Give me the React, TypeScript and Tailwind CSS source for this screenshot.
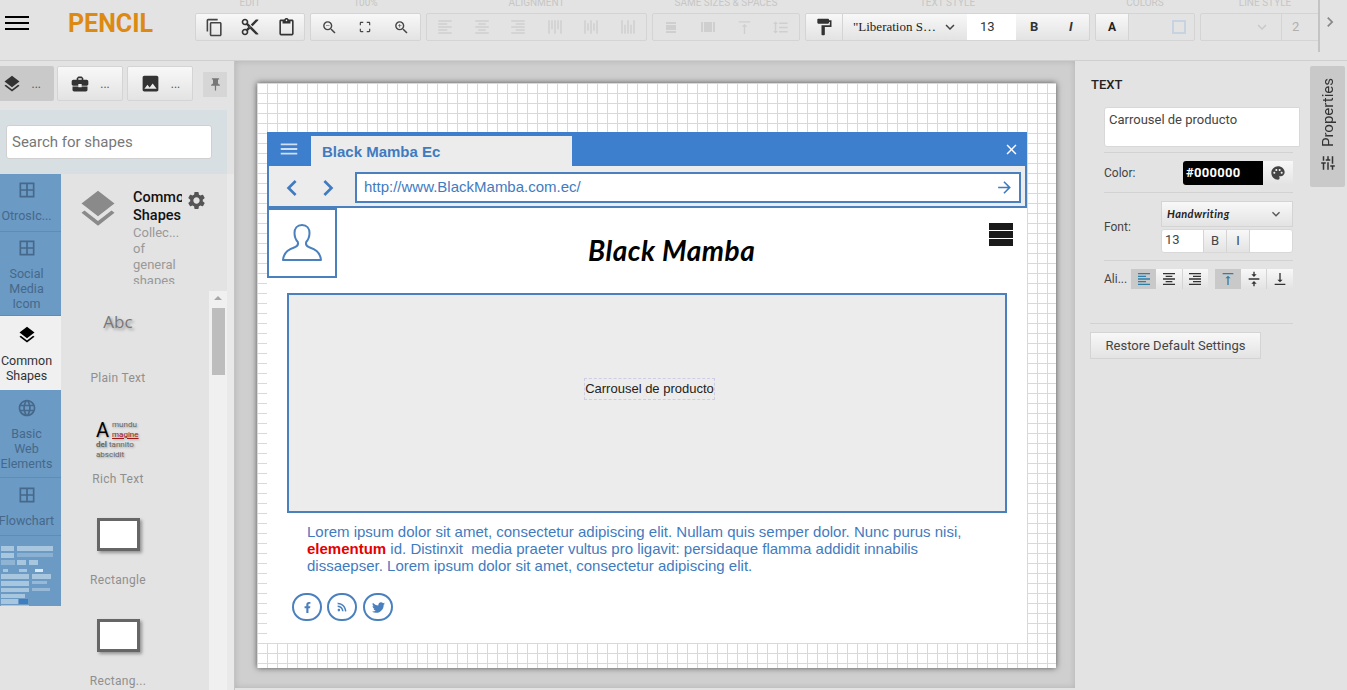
import { ReactNode } from "react"
import {
  MdContentCopy, MdContentCut, MdContentPaste, MdZoomIn, MdZoomOut, MdCropFree,
  MdFormatAlignLeft, MdFormatAlignCenter, MdFormatAlignRight, MdFormatLineSpacing,
  MdFormatPaint, MdLayers, MdBusinessCenter, MdImage, MdPushPin, MdBorderAll, MdLanguage,
  MdSettings, MdPalette, MdTune, MdVerticalAlignTop, MdVerticalAlignBottom, MdVerticalAlignCenter,
  MdKeyboardArrowDown, MdChevronRight, MdClose, MdMenu, MdArrowForward, MdChevronLeft,
} from "react-icons/md"
import { FaFacebookF, FaRss, FaTwitter } from "react-icons/fa"

const btn = "bg-gradient-to-b from-[#f8f8f8] to-[#e3e3e3]"

const Group = ({ label, w, off, children }: { label: string; w: string; off?: boolean; children: ReactNode }) => (
  <div className={`${w} shrink-0 flex flex-col items-stretch`}>
    <div className="h-[13px] overflow-hidden text-center text-[10px] leading-[6px] text-[#c6c6c6] whitespace-nowrap">{label}</div>
    <div className={`h-[28px] flex items-center border border-[#d4d4d4] rounded-[2px] ${off ? "" : btn}`}>{children}</div>
  </div>
)

const Cell = ({ children, className = "" }: { children?: ReactNode; className?: string }) => (
  <div className={`flex-1 h-full flex items-center justify-center ${className}`}>{children}</div>
)

const Bars = ({ h = false }: { h?: boolean }) => (
  <svg width="16" height="16" viewBox="0 0 16 16" fill="#cfcfcf">
    {h ? <path d="M3 3h10v2H3zM3 6h10v5H3zM3 12h10v2H3z" /> : <path d="M1 3h2v10H1zM4 3h8v10H4zM13 3h2v10h-2z" />}
  </svg>
)

const Category = ({ icon, lines, h, pt, active }: { icon: ReactNode; lines: string[]; h: string; pt: string; active?: boolean }) => (
  <div className={`${h} ${pt} w-full flex flex-col items-center overflow-hidden pr-[8px] text-[12.5px] leading-[15px] text-center border-b ${active ? "bg-[#f0f0f0] text-[#333] border-transparent" : "bg-[#6b9ac4] text-[#46688a] border-[#5f8cb5]"}`}>
    <div className="h-[30px] flex items-center justify-center shrink-0">{icon}</div>
    <div className="whitespace-nowrap mt-[3px]">
      {lines.map((l) => <div key={l}>{l}</div>)}
    </div>
  </div>
)

const ShapeItem = ({ label, pt, children }: { label: string; pt: string; children: ReactNode }) => (
  <div className="h-[101px] shrink-0 flex flex-col items-center">
    <div className={`h-[79px] w-full flex justify-center ${pt}`}>{children}</div>
    <div className="text-[12px] leading-[16px] tracking-[0.3px] text-[#8f8f8f]">{label}</div>
  </div>
)

const RectShape = () => <div className="w-[43px] h-[33px] bg-white border-[3px] border-[#666] shadow-[2px_2px_3px_rgba(0,0,0,0.35)]" />

const Separator = ({ className = "" }: { className?: string }) => <div className={`h-px bg-[#d2d2d2] ${className}`} />

const SocialIcon = ({ children }: { children: ReactNode }) => (
  <div className="w-[30px] h-[28px] rounded-full border-2 border-[#4a80be] flex items-center justify-center text-[#4a80be]">{children}</div>
)

const App = () => {
  return (
    <div className="w-[1347px] h-[690px] overflow-hidden flex flex-col bg-[#e3e3e3] font-['Roboto',sans-serif]">
      {/* top bar */}
      <div className="h-[61px] shrink-0 flex border-b border-[#cfcfcf]">
        <div className="w-[68px] shrink-0 pl-[5px] pt-[16px]">
          <div className="w-[24px] h-[14px] flex flex-col justify-between">
            <div className="h-[2px] bg-black" />
            <div className="h-[2px] bg-black" />
            <div className="h-[2px] bg-black" />
          </div>
        </div>
        <div className="w-[127px] shrink-0 pt-[9px] text-[25px] leading-[30px] font-bold text-[#dd8a12]">PENCIL</div>
        <div className="w-[1123px] shrink-0 h-[52px] flex gap-[5px] overflow-hidden">
          <Group label="EDIT" w="w-[110px]">
            <Cell><MdContentCopy size={19} className="text-[#444]" /></Cell>
            <Cell><MdContentCut size={20} className="text-[#333]" /></Cell>
            <Cell><MdContentPaste size={19} className="text-[#333]" /></Cell>
          </Group>
          <Group label="100%" w="w-[111px]">
            <Cell><MdZoomOut size={17} className="text-[#444]" /></Cell>
            <Cell><MdCropFree size={14} className="text-[#444]" /></Cell>
            <Cell><MdZoomIn size={17} className="text-[#444]" /></Cell>
          </Group>
          <Group label="ALIGNMENT" w="w-[221px]" off>
            <Cell><MdFormatAlignLeft size={18} className="text-[#cfcfcf]" /></Cell>
            <Cell><MdFormatAlignCenter size={18} className="text-[#cfcfcf]" /></Cell>
            <Cell><MdFormatAlignRight size={18} className="text-[#cfcfcf]" /></Cell>
            <Cell><MdFormatAlignLeft size={18} className="text-[#cfcfcf] rotate-90" /></Cell>
            <Cell><MdFormatAlignCenter size={18} className="text-[#cfcfcf] rotate-90" /></Cell>
            <Cell><MdFormatAlignRight size={18} className="text-[#cfcfcf] rotate-90" /></Cell>
          </Group>
          <Group label="SAME SIZES & SPACES" w="w-[148px]" off>
            <Cell><Bars h /></Cell>
            <Cell><Bars /></Cell>
            <Cell><MdVerticalAlignTop size={17} className="text-[#cfcfcf]" /></Cell>
            <Cell><MdFormatLineSpacing size={17} className="text-[#cfcfcf]" /></Cell>
          </Group>
          <Group label="TEXT STYLE" w="w-[285px]">
            <div className="w-[37px] h-full flex items-center justify-center border-r border-[#d4d4d4]">
              <MdFormatPaint size={20} className="text-[#333]" />
            </div>
            <div className="w-[124px] h-full flex items-center justify-between pl-[10px] pr-[8px] font-['Liberation_Serif',serif] text-[13px] text-[#222] whitespace-nowrap">
              <span>"Liberation S…</span>
              <MdKeyboardArrowDown size={18} className="text-[#444]" />
            </div>
            <div className="w-[49px] h-full bg-white flex items-center pl-[13px] text-[13px] text-[#333]">13</div>
            <Cell className="font-bold text-[13px] text-[#333]">B</Cell>
            <Cell className="font-bold italic text-[13px] text-[#333]">I</Cell>
          </Group>
          <Group label="COLORS" w="w-[100px]" off>
            <div className={`w-[33px] h-full flex items-center justify-center border-r border-[#d4d4d4] font-bold text-[12px] text-[#222] ${btn}`}>A</div>
            <div className="flex-1 h-full flex items-center justify-end pr-[8px]">
              <div className="w-[14px] h-[14px] border-2 border-[#c7d3e0]" />
            </div>
          </Group>
          <Group label="LINE STYLE" w="w-[130px]" off>
            <div className="w-[81px] h-full flex items-center justify-end pr-[10px] border-r border-[#d4d4d4]">
              <MdKeyboardArrowDown size={18} className="text-[#c9c9c9]" />
            </div>
            <div className="pl-[10px] text-[13px] text-[#b0b0b0]">2</div>
          </Group>
        </div>
        <div className="w-[2px] h-[52px] shrink-0 bg-[#c4c4c4]" />
        <div className="flex-1 pt-[12px]"><MdChevronRight size={20} className="text-[#888]" /></div>
      </div>

      <div className="flex-1 flex min-h-0">
        {/* left panel */}
        <div className="w-[235px] shrink-0 flex flex-col border-r border-[#c4c4c4]">
          <div className="h-[49px] shrink-0 flex pt-[5px] text-[12px] text-[#555]">
            <div className="w-[54px] h-[35px] bg-[#c9c9c9] flex items-center justify-end gap-[10px] pr-[13px] rounded-r-[2px]">
              <MdLayers size={20} className="text-[#333]" /><span>...</span>
            </div>
            <div className={`ml-[3px] w-[66px] h-[35px] border border-[#d4d4d4] rounded-[2px] flex items-center justify-center gap-[10px] ${btn}`}>
              <MdBusinessCenter size={20} className="text-[#333]" /><span>...</span>
            </div>
            <div className={`ml-[4px] w-[66px] h-[35px] border border-[#d4d4d4] rounded-[2px] flex items-center justify-center gap-[10px] ${btn}`}>
              <MdImage size={21} className="text-[#333]" /><span>...</span>
            </div>
            <div className="ml-[10px] mt-[6px] w-[24px] h-[25px] bg-[#d6d6d6] flex items-center justify-center">
              <MdPushPin size={15} className="text-[#777]" />
            </div>
          </div>
          <div className="w-[227px] h-[64px] shrink-0 bg-[#d8dfe3] pl-[6px] pt-[15px]">
            <div className="w-[206px] h-[34px] bg-white border border-[#d0d0d0] rounded-[3px] flex items-center pl-[5px] text-[15px] text-[#777]">Search for shapes</div>
          </div>
          <div className="flex-1 min-h-0 flex">
            <div className="w-[61px] shrink-0 flex flex-col overflow-hidden">
              <Category h="h-[58px]" pt="pt-[1px]" lines={["OtrosIc..."]} icon={<MdBorderAll size={20} className="text-[#46688a]" />} />
              <Category h="h-[84px]" pt="pt-[1px]" lines={["Social", "Media", "Icom"]} icon={<MdBorderAll size={20} className="text-[#46688a]" />} />
              <Category h="h-[74px]" pt="pt-[4px]" active lines={["Common", "Shapes"]} icon={<MdLayers size={20} className="text-black" />} />
              <Category h="h-[88px]" pt="pt-[3px]" lines={["Basic", "Web", "Elements"]} icon={<MdLanguage size={20} className="text-[#46688a]" />} />
              <Category h="h-[58px]" pt="pt-[2px]" lines={["Flowchart"]} icon={<MdBorderAll size={20} className="text-[#46688a]" />} />
              <div className="h-[70px] bg-[#6b9ac4]">
                <svg width="61" height="70" viewBox="0 0 61 70" fill="#a9c6df">
                  <rect x="1" y="10" width="13" height="5" /><rect x="17" y="10" width="36" height="5" />
                  <rect x="1" y="17" width="13" height="5" /><rect x="17" y="17" width="36" height="4" opacity=".5" />
                  <rect x="1" y="24" width="14" height="5" opacity=".6" /><rect x="17" y="24" width="9" height="5" /><rect x="29" y="24" width="9" height="5" />
                  <rect x="3" y="33" width="5" height="3" /><rect x="19" y="33" width="8" height="3" /><rect x="35" y="33" width="8" height="3" fill="#dbe8f3" />
                  <rect x="1" y="38" width="28" height="5" /><rect x="32" y="38" width="19" height="5" />
                  <rect x="1" y="45" width="28" height="5" /><rect x="32" y="45" width="15" height="3" opacity=".7" />
                  <rect x="1" y="52" width="28" height="4" /><rect x="32" y="52" width="18" height="3" opacity=".7" />
                  <rect x="1" y="58" width="24" height="4" />
                  <rect x="1" y="63" width="17" height="5" /><rect x="19" y="63" width="9" height="5" fill="#3f7cc0" />
                  <rect x="1" y="69" width="28" height="1" />
                </svg>
              </div>
            </div>
            <div className="w-[166px] shrink-0 flex flex-col">
              <div className="h-[117px] shrink-0 flex pl-[15px] pt-[15px] overflow-hidden">
                <MdLayers size={44} className="text-[#8a8a8a] shrink-0 mt-[-2px]" />
                <div className="ml-[13px] w-[49px] shrink-0 h-[95px] overflow-hidden">
                  <div className="text-[14.5px] leading-[18px] font-medium text-[#111] overflow-hidden whitespace-nowrap">Common</div>
                  <div className="text-[14.5px] leading-[18px] font-medium text-[#111]">Shapes</div>
                  <div className="text-[13px] leading-[16px] text-[#999]">Collec...</div>
                  <div className="text-[13px] leading-[16px] text-[#999]">of</div>
                  <div className="text-[13px] leading-[16px] text-[#999]">general</div>
                  <div className="text-[13px] leading-[16px] text-[#999]">shapes</div>
                </div>
                <MdSettings size={21} className="text-[#555] ml-[4px] mt-[1px] shrink-0" />
              </div>
              <div className="flex-1 min-h-0 flex">
                <div className="w-[148px] shrink-0 pr-[34px] flex flex-col overflow-hidden">
                  <ShapeItem label="Plain Text" pt="pt-[21px]">
                    <div className="text-[17px] leading-[20px] text-[#777] font-['Open_Sans',sans-serif] [text-shadow:2px_2px_3px_rgba(0,0,0,0.35)]">Abc</div>
                  </ShapeItem>
                  <ShapeItem label="Rich Text" pt="pt-[28px]">
                    <div className="w-[44px] text-[8px] leading-[10px] text-[#666] [text-shadow:1px_1px_2px_rgba(0,0,0,0.3)]">
                      <div className="flex">
                        <span className="text-[20px] leading-[20px] text-black mr-[3px]">A</span>
                        <div><div>mundu</div><div className="text-[#a01818] underline">magine</div></div>
                      </div>
                      <div><b>del</b> tannito</div>
                      <div>abscidit</div>
                    </div>
                  </ShapeItem>
                  <ShapeItem label="Rectangle" pt="pt-[25px]"><RectShape /></ShapeItem>
                  <ShapeItem label="Rectang..." pt="pt-[25px]"><RectShape /></ShapeItem>
                </div>
                <div className="w-[18px] shrink-0 bg-[#f0f0f0] flex flex-col items-center">
                  <div className="h-[17px] pt-[5px]"><div className="w-0 h-0 border-x-[4px] border-x-transparent border-b-[4px] border-b-[#a8a8a8]" /></div>
                  <div className="w-[13px] h-[67px] bg-[#bdbdbd]" />
                </div>
              </div>
            </div>
            <div className="w-[7px] shrink-0 bg-[#e9e9e9]" />
          </div>
        </div>

        {/* canvas */}
        <div className="w-[840px] shrink-0 bg-[#cfcfcf] pl-[22px] pt-[22px] border-b-2 border-[#e3e3e3] shadow-[inset_0_0_6px_rgba(0,0,0,0.14)]">
          <div className="w-[799px] h-[585px] pl-[10px] pt-[49px] bg-white bg-[linear-gradient(#d9d9d9_1px,transparent_1px),linear-gradient(90deg,#d9d9d9_1px,transparent_1px)] bg-[size:10px_10px] shadow-[0_0_6px_rgba(0,0,0,0.6)]">
            <div className="w-[760px] h-[511px] bg-white flex flex-col">
              <div className="h-[34px] shrink-0 bg-[#3d7fcc] flex items-end">
                <div className="w-[44px] h-full flex items-center justify-center"><MdMenu size={22} className="text-[#cfe0f3]" /></div>
                <div className="w-[261px] h-[30px] bg-[#ececec] pl-[11px] pt-[2px] flex items-center font-['Liberation_Sans',sans-serif] font-bold text-[15px] text-[#3f7bc0]">Black Mamba Ec</div>
                <div className="flex-1 h-full flex items-center justify-end pr-[7px]"><MdClose size={17} className="text-white" /></div>
              </div>
              <div className="h-[42px] shrink-0 bg-[#ececec] border-x-2 border-b-[2px] border-[#4a80be] flex items-center pt-[3px]">
                <MdChevronLeft size={32} className="text-[#3f7bc0] ml-[7px]" />
                <MdChevronRight size={32} className="text-[#3f7bc0] ml-[4px]" />
                <div className="ml-[11px] w-[666px] h-[31px] bg-white border-2 border-[#4a80be] flex items-center justify-between pl-[7px] pr-[5px] font-['Liberation_Sans',sans-serif] text-[15px] text-[#3f7bc0]">
                  <span>http://www.BlackMamba.com.ec/</span>
                  <MdArrowForward size={19} className="text-[#3f7bc0]" />
                </div>
              </div>
              <div className="flex-1 flex flex-col">
                <div className="h-[85px] shrink-0 flex">
                  <div className="w-[70px] h-[70px] shrink-0 border-2 border-[#4a80be] flex items-center justify-center">
                    <svg width="42" height="42" viewBox="0 0 42 42" fill="none" stroke="#4a80be" strokeWidth="2" strokeLinejoin="round">
                      <path d="M21 3c-5 0-7.500 3.500-7.500 8 0 4 1.500 7 3.300 9 .6 2-.2 4-2.800 5.200C9 27 3 29 2 38h38c-1-9-7-11-12-12.800-2.600-1.200-3.400-3.200-2.800-5.200 1.800-2 3.300-5 3.300-9 0-4.500-2.500-8-7.500-8z" />
                    </svg>
                  </div>
                  <div className="w-[652px] shrink-0 pt-[24px] pl-[251px] text-[28px] leading-[36px] font-bold italic tracking-[0.5px] text-black font-['Lato',sans-serif] whitespace-nowrap">Black Mamba</div>
                  <div className="w-[38px] shrink-0 pt-[15px]">
                    <div className="w-[24px] flex flex-col gap-px">
                      <div className="h-[7px] bg-[#1a1a1a]" /><div className="h-[7px] bg-[#1a1a1a]" /><div className="h-[7px] bg-[#1a1a1a]" />
                    </div>
                  </div>
                </div>
                <div className="ml-[20px] w-[720px] h-[220px] shrink-0 bg-[#ececec] border-2 border-[#4a80be] flex items-center justify-center font-['Liberation_Sans',sans-serif] text-[13px] text-[#222]">
                  <span className="mb-[28px] ml-[5px] outline-1 outline-dashed outline-[#cfcde6]">Carrousel de producto</span>
                </div>
                <div className="ml-[40px] mt-[10px] w-[670px] font-['Liberation_Sans',sans-serif] text-[15px] leading-[17px] text-[#3f7bc0]">
                  Lorem ipsum dolor sit amet, consectetur adipiscing elit. Nullam quis semper dolor. Nunc purus nisi, <b className="text-[#e60000]">elementum</b> id. Distinxit&nbsp; media praeter vultus pro ligavit: persidaque flamma addidit innabilis dissaepser. Lorem ipsum dolor sit amet, consectetur adipiscing elit.
                </div>
                <div className="ml-[25px] mt-[19px] flex gap-[5px]">
                  <SocialIcon><FaFacebookF size={11} /></SocialIcon>
                  <SocialIcon><FaRss size={10} /></SocialIcon>
                  <div className="ml-px"><SocialIcon><FaTwitter size={13} /></SocialIcon></div>
                </div>
              </div>
            </div>
          </div>
        </div>

        {/* right panel */}
        <div className="flex-1 flex min-w-0 text-[12px] text-[#444]">
          <div className="w-[235px] shrink-0 pl-[15px] pt-[16px] overflow-hidden">
            <div className="ml-px text-[13px] leading-[16px] font-medium text-[#222]">TEXT</div>
            <div className="ml-[14px] mt-[14px] w-[196px] h-[40px] bg-white border border-[#d8d8d8] rounded-l-[3px] px-[4px] pt-[4px] text-[13px] leading-[16px] text-[#444] whitespace-nowrap">Carrousel de producto</div>
            <Separator className="ml-[14px] mt-[5px] w-[189px]" />
            <div className="ml-[14px] mt-[8px] w-[189px] h-[24px] flex items-center">
              <span className="w-[79px]">Color:</span>
              <div className="w-[80px] h-full bg-black rounded-l-[3px] flex items-center pl-[3px] font-bold text-[13px] text-white tracking-[0.3px]">#000000</div>
              <div className={`w-[30px] h-full flex items-center justify-center ${btn}`}><MdPalette size={16} className="text-[#444]" /></div>
            </div>
            <Separator className="ml-[14px] mt-[7px] w-[189px]" />
            <div className="ml-[14px] mt-[8px] w-[189px] flex items-center">
              <span className="w-[57px]">Font:</span>
              <div className="w-[132px]">
                <div className={`h-[26px] border border-[#d4d4d4] flex items-center justify-between pl-[5px] pr-[8px] font-['Lato',sans-serif] italic font-bold tracking-[0.4px] text-[11px] text-[#222] ${btn}`}>
                  <span>Handwriting</span><MdKeyboardArrowDown size={16} className="text-[#555]" />
                </div>
                <div className="mt-[2px] h-[24px] flex bg-white border border-[#d8d8d8] rounded-[3px] text-[13px]">
                  <div className="w-[41px] pl-[3px]">13</div>
                  <div className={`w-[24px] flex items-center justify-center border-x border-[#d4d4d4] ${btn}`}>B</div>
                  <div className={`w-[23px] flex items-center justify-center border-r border-[#d4d4d4] ${btn}`}>I</div>
                </div>
              </div>
            </div>
            <Separator className="ml-[14px] mt-[7px] w-[189px]" />
            <div className="ml-[14px] mt-[8px] w-[189px] h-[20px] flex items-center">
              <span className="w-[27px]">Ali...</span>
              <div className="w-[77px] h-full flex">
                <div className="flex-1 bg-[#c9c9c9] flex items-center justify-center"><MdFormatAlignLeft size={16} className="text-[#2d7fa8]" /></div>
                <div className={`flex-1 flex items-center justify-center border-r border-[#d4d4d4] ${btn}`}><MdFormatAlignCenter size={16} className="text-[#333]" /></div>
                <div className={`flex-1 flex items-center justify-center ${btn}`}><MdFormatAlignRight size={16} className="text-[#333]" /></div>
              </div>
              <div className="ml-[7px] w-[78px] h-full flex">
                <div className="flex-1 bg-[#c9c9c9] flex items-center justify-center"><MdVerticalAlignTop size={16} className="text-[#2d7fa8]" /></div>
                <div className={`flex-1 flex items-center justify-center border-r border-[#d4d4d4] ${btn}`}><MdVerticalAlignCenter size={16} className="text-[#333]" /></div>
                <div className={`flex-1 flex items-center justify-center ${btn}`}><MdVerticalAlignBottom size={16} className="text-[#333]" /></div>
              </div>
            </div>
            <Separator className="mt-[34px] w-[203px]" />
            <div className={`mt-[8px] w-[171px] h-[27px] border border-[#d4d4d4] flex items-center justify-center text-[13px] text-[#444] ${btn}`}>Restore Default Settings</div>
          </div>
          <div className="w-[35px] h-[121px] mt-[5px] bg-[#c9c9c9] rounded-[2px] flex flex-col items-center justify-end pb-[15px] pl-px shrink-0">
            <span className="[writing-mode:vertical-rl] rotate-180 text-[15px] leading-[16px] text-[#333] mb-[7px]">Properties</span>
            <MdTune size={18} className="text-[#333] rotate-90" />
          </div>
        </div>
      </div>
    </div>
  )
}

export default App
